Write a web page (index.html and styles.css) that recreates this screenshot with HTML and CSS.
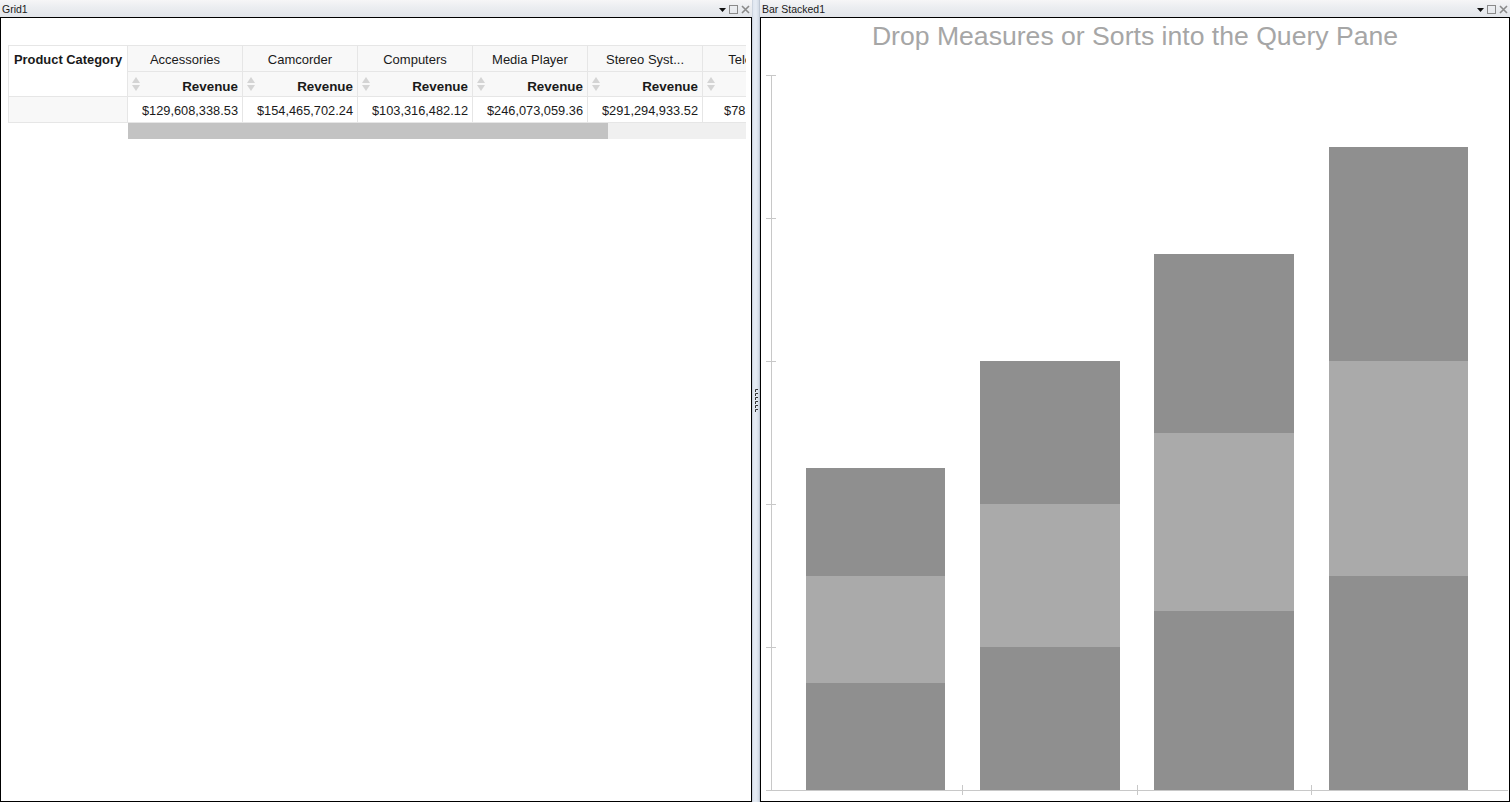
FILE: index.html
```html
<!DOCTYPE html>
<html>
<head>
<meta charset="utf-8">
<link rel="stylesheet" href="styles.css">
</head>
<body>
<div class="app">
  <section class="pane pane-left">
    <header class="titlebar">
      <span class="title">Grid1</span>
      <span class="tools">
        <svg width="34" height="12" viewBox="0 0 34 12">
          <path d="M1 4 L8 4 L4.5 8 Z" fill="#111"/>
          <rect x="11.5" y="1.5" width="8" height="8" fill="none" stroke="#8a8a8a"/>
          <path d="M24 2 L31 9 M31 2 L24 9" stroke="#8a8a8a" stroke-width="1.6"/>
        </svg>
      </span>
    </header>
    <div class="body grid-body">
      <div class="grid">
        <div class="fixed-col">
          <div class="cell corner">Product Category</div>
          <div class="cell rowhead"></div>
        </div>
        <div class="scroll-area">
          <div class="cols">
            <div class="col"><div class="cell colhead">Accessories</div><div class="cell measure"><i class="sort"></i>Revenue</div><div class="cell value">$129,608,338.53</div></div>
            <div class="col"><div class="cell colhead">Camcorder</div><div class="cell measure"><i class="sort"></i>Revenue</div><div class="cell value">$154,465,702.24</div></div>
            <div class="col"><div class="cell colhead">Computers</div><div class="cell measure"><i class="sort"></i>Revenue</div><div class="cell value">$103,316,482.12</div></div>
            <div class="col"><div class="cell colhead">Media Player</div><div class="cell measure"><i class="sort"></i>Revenue</div><div class="cell value">$246,073,059.36</div></div>
            <div class="col"><div class="cell colhead">Stereo Syst...</div><div class="cell measure"><i class="sort"></i>Revenue</div><div class="cell value">$291,294,933.52</div></div>
            <div class="col"><div class="cell colhead">Televisions</div><div class="cell measure"><i class="sort"></i>Revenue</div><div class="cell value">$78,356,221.07</div></div>
          </div>
          <div class="hscroll"><div class="thumb"></div></div>
        </div>
      </div>
    </div>
  </section>

  <div class="splitter">
    <svg class="grip" width="6" height="26" viewBox="0 0 6 26">
      <path d="M1.5 4 V1.5 H4 M1.5 8 V5.5 H4 M1.5 12 V9.5 H4 M1.5 16 V13.5 H4 M1.5 20 V17.5 H4 M1.5 24 V21.5 H4" fill="none" stroke="#333" stroke-width="1"/>
    </svg>
  </div>

  <section class="pane pane-right">
    <header class="titlebar">
      <span class="title">Bar Stacked1</span>
      <span class="tools">
        <svg width="34" height="12" viewBox="0 0 34 12">
          <path d="M1 4 L8 4 L4.5 8 Z" fill="#111"/>
          <rect x="11.5" y="1.5" width="8" height="8" fill="none" stroke="#8a8a8a"/>
          <path d="M24 2 L31 9 M31 2 L24 9" stroke="#8a8a8a" stroke-width="1.6"/>
        </svg>
      </span>
    </header>
    <div class="body chart-body">
      <div class="chart-title">Drop Measures or Sorts into the Query Pane</div>
      <svg class="plot" width="747" height="742" viewBox="0 0 747 742">
        <g fill="#8f8f8f">
          <rect x="45" y="410" width="139" height="108"/>
          <rect x="45" y="625" width="139" height="107"/>
          <rect x="219" y="303" width="140" height="143"/>
          <rect x="219" y="589" width="140" height="143"/>
          <rect x="393" y="196" width="140" height="179"/>
          <rect x="393" y="553" width="140" height="179"/>
          <rect x="568" y="89" width="139" height="214"/>
          <rect x="568" y="518" width="139" height="214"/>
        </g>
        <g fill="#aaaaaa">
          <rect x="45" y="518" width="139" height="107"/>
          <rect x="219" y="446" width="140" height="143"/>
          <rect x="393" y="375" width="140" height="178"/>
          <rect x="568" y="303" width="139" height="215"/>
        </g>
        <g stroke="#c8c8c8" stroke-width="1" fill="none" shape-rendering="crispEdges">
          <path d="M10.5 17 V732"/>
          <path d="M5 17.5 H15 M5 160.5 H15 M5 303.5 H15 M5 446.5 H15 M5 589.5 H15"/>
          <path d="M5 732.5 H747"/>
          <path d="M201.5 727 V737 M376.5 727 V737 M550.5 727 V737"/>
        </g>
      </svg>
    </div>
  </section>
</div>
</body>
</html>
```

FILE: styles.css
```css
* { box-sizing: border-box; }
html, body { margin: 0; padding: 0; }
body {
  width: 1510px;
  height: 802px;
  overflow: hidden;
  background: #ffffff;
  font-family: "Liberation Sans", Arial, sans-serif;
}
.app {
  display: flex;
  width: 1510px;
  height: 802px;
}
.pane {
  display: flex;
  flex-direction: column;
  height: 802px;
}
.pane-left { width: 752px; }
.pane-right { width: 750px; }

.titlebar {
  height: 17px;
  flex: 0 0 17px;
  display: flex;
  align-items: center;
  justify-content: space-between;
  background: linear-gradient(#f6f6f7 0%, #eceef1 40%, #e2e5ea 100%);
  padding: 0 0 0 2px;
}
.title {
  font-size: 10.5px;
  color: #1a1a1a;
  line-height: 17px;
  padding-top: 2px;
}
.tools {
  display: flex;
  align-items: center;
  padding-top: 2px;
}
.tools svg { display: block; }

.body {
  flex: 1;
  border: 1px solid #000;
  background: #fff;
  overflow: hidden;
}

/* splitter */
.splitter {
  width: 8px;
  height: 802px;
  background: linear-gradient(90deg, #b9c2ce 0, #dfe6f0 1px, #e6ecf4 4px, #d2dae5 7px, #aab4c2 8px);
  display: flex;
  align-items: center;
  justify-content: center;
}
.grip { display: block; margin-left: 1px; }

/* grid */
.grid-body {
  padding: 27px 0 0 7px;
}
.grid {
  display: flex;
  align-items: flex-start;
}
.fixed-col {
  width: 120px;
  display: flex;
  flex-direction: column;
}
.cell {
  border-right: 1px solid #e6e6e6;
  border-bottom: 1px solid #e6e6e6;
  color: #1a1a1a;
  white-space: nowrap;
  overflow: hidden;
}
.corner {
  height: 52px;
  border-top: 1px solid #e6e6e6;
  border-left: 1px solid #e6e6e6;
  background: #fff;
  font-weight: bold;
  font-size: 12.9px;
  padding: 6px 0 0 5px;
}
.rowhead {
  height: 26px;
  border-left: 1px solid #e6e6e6;
  background: #f8f8f8;
}
.scroll-area {
  width: 618px;
  overflow: hidden;
}
.cols {
  display: flex;
  width: max-content;
}
.col {
  width: 115px;
  display: flex;
  flex-direction: column;
}
.colhead {
  height: 27px;
  border-top: 1px solid #e6e6e6;
  background: #f8f8f8;
  font-size: 13px;
  text-align: center;
  line-height: 27px;
}
.measure {
  height: 25px;
  background: #f8f8f8;
  font-weight: bold;
  font-size: 13.4px;
  text-align: right;
  padding-right: 4px;
  line-height: 29px;
  position: relative;
}
.sort {
  position: absolute;
  left: 4px;
  top: 5px;
  width: 9px;
  height: 15px;
}
.sort::before, .sort::after {
  content: "";
  position: absolute;
  left: 0;
  border-left: 4.5px solid transparent;
  border-right: 4.5px solid transparent;
}
.sort::before {
  top: 0;
  border-bottom: 6px solid #d4d4d4;
}
.sort::after {
  top: 8px;
  border-top: 6px solid #d4d4d4;
}
.value {
  height: 26px;
  background: #fff;
  font-size: 12.8px;
  text-align: right;
  padding-right: 4px;
  line-height: 28px;
}
.hscroll {
  height: 16px;
  background: #f0f0f0;
}
.thumb {
  width: 480px;
  height: 16px;
  background: #c3c3c3;
}

/* chart */
.chart-body {
  display: flex;
  flex-direction: column;
}
.chart-title {
  height: 40px;
  flex: 0 0 40px;
  line-height: 36px;
  text-align: center;
  font-size: 26.6px;
  color: #a6a6a6;
}
.plot { display: block; }
```
